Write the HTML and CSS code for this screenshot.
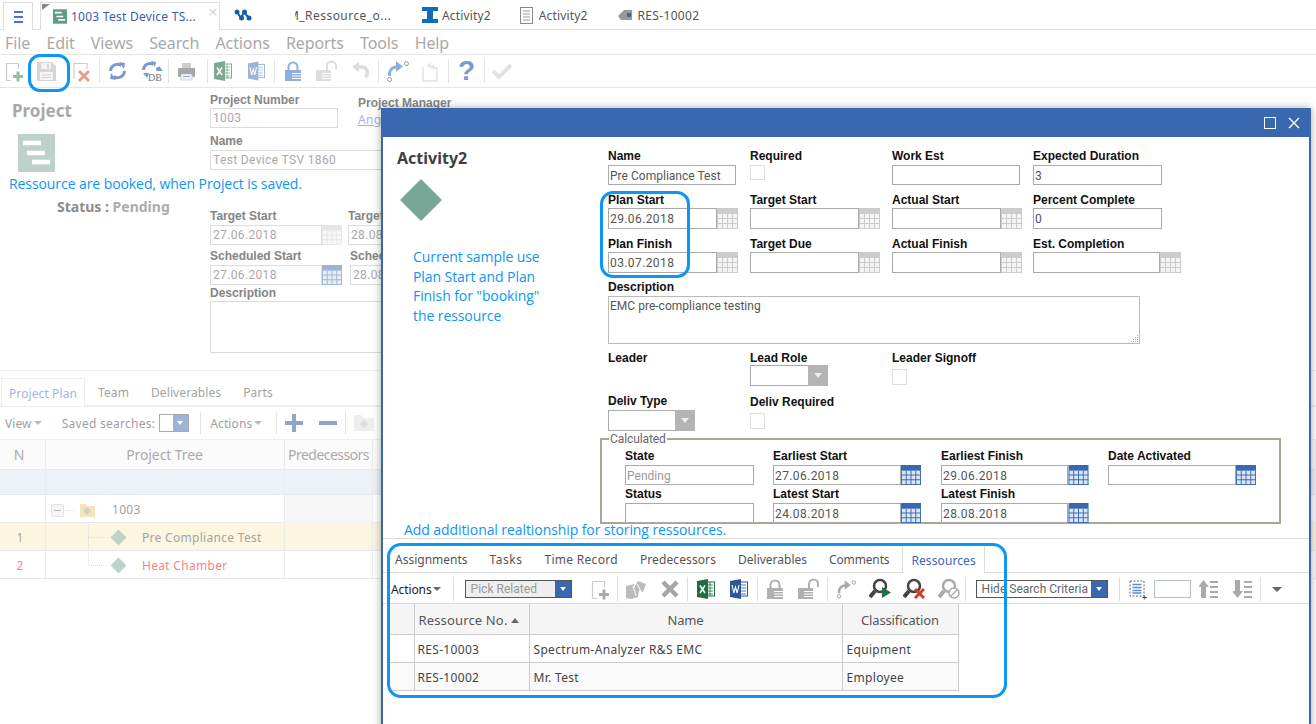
FILE: index.html
```html
<!DOCTYPE html>
<html lang="en">
<head>
<meta charset="utf-8">
<title>Activity2</title>
<link rel="stylesheet" href="styles.css">
</head>
<body>
<svg class="sprite" aria-hidden="true">
  <symbol id="i-new" viewBox="0 0 18 22"><path d="M13 3.5H1.5V20.5H6M13.5 3V9" fill="none" stroke="var(--b)" stroke-width="1.2"/><path d="M8 16.5h10M13 11.5v10" fill="none" stroke="var(--a)" stroke-width="3"/></symbol>
  <symbol id="i-save" viewBox="0 0 20 22"><path d="M1 2H16L20 6V21H1Z" fill="#d6d6d6"/><rect x="5" y="3" width="10" height="6" fill="#f2f2f2"/><rect x="11" y="4" width="2" height="4" fill="#d6d6d6"/><rect x="4" y="12" width="13" height="8" fill="#f4f4f4"/><path d="M6 15h9M6 17.500h9" stroke="#d6d6d6"/></symbol>
  <symbol id="i-del" viewBox="0 0 17 22"><path d="M1 19V3.500H14V9" fill="none" stroke="#ccc" stroke-width="1.200"/><path d="M6 11L16 21M16 11L6 21" stroke="#e89d88" stroke-width="3"/></symbol>
  <symbol id="i-refresh" viewBox="0 0 19 22"><path d="M2.500 11a7 7 0 0 1 11-5.500M16.500 11a7 7 0 0 1-11 5.500" fill="none" stroke="#7c9ac8" stroke-width="3"/><path d="M11 2l6 1-1 6zM8 20l-6-1 1-6z" fill="#7c9ac8"/></symbol>
  <symbol id="i-db" viewBox="0 0 21 22"><path d="M1.500 10a6.500 6.500 0 0 1 10-5.500M15 7.500a6 6 0 0 1 .5 2" fill="none" stroke="#7c9ac8" stroke-width="3"/><path d="M9 1l5 1-1 5zM17 6l4 5h-7zM1 13h6l-2 5z" fill="#7c9ac8"/><text x="6" y="21" font-family="Liberation Serif, serif" font-size="10" fill="#777">DB</text></symbol>
  <symbol id="i-print" viewBox="0 0 17 22"><rect x="4" y="3" width="9" height="6" fill="#ccc"/><rect x="0" y="8" width="17" height="9" rx="1" fill="#a6a6a6"/><rect x="3" y="14" width="11" height="6" fill="#f2f2f2" stroke="#bbb" stroke-width=".6"/><path d="M5 16.500h7" stroke="#8fb0dc"/></symbol>
  <symbol id="i-xl" viewBox="0 0 18 22"><rect x="9" y="4" width="8.500" height="14" fill="#fff" stroke="var(--a)"/><path d="M11 7h5M11 10h5M11 13h5M11 16h5M13 4v14" stroke="var(--a)" stroke-width=".8"/><path d="M0 3L11 1V21L0 19Z" fill="var(--a)"/><path d="M3 7.500L8 15M8 7.500L3 15" stroke="#fff" stroke-width="1.500"/></symbol>
  <symbol id="i-wd" viewBox="0 0 18 22"><rect x="9" y="4" width="8.500" height="14" fill="#fff" stroke="var(--a)"/><path d="M11 7h5M11 10h5M11 13h5M11 16h5" stroke="var(--a)" stroke-width=".8"/><path d="M0 3L11 1V21L0 19Z" fill="var(--a)"/><path d="M2 7L3.800 15L5.500 9L7.200 15L9 7" fill="none" stroke="#fff" stroke-width="1.100"/></symbol>
  <symbol id="i-lock" viewBox="0 0 16 22"><path d="M3.500 10V7a4.500 4.500 0 0 1 9 0V10" fill="none" stroke="var(--a)" stroke-width="2"/><rect x="0" y="10" width="16" height="11" fill="var(--a)"/><path d="M7 13.500h9M7 16h9M7 18.500h9" stroke="#fff" stroke-width="1"/></symbol>
  <symbol id="i-unlock" viewBox="0 0 22 22"><path d="M11 10V6a4.500 4.500 0 0 1 9 0V9" fill="none" stroke="var(--a)" stroke-width="2"/><rect x="0" y="10" width="15" height="11" fill="var(--a)"/><path d="M6 13.500h9M6 16h9M6 18.500h9" stroke="#fff" stroke-width="1"/></symbol>
  <symbol id="i-undo" viewBox="0 0 17 22"><path d="M6 7H10a5.500 5.500 0 0 1 3 10" fill="none" stroke="#ddd" stroke-width="3.500"/><path d="M0 7l7-5v10z" fill="#ddd"/></symbol>
  <symbol id="i-route" viewBox="0 0 23 22"><path d="M3.500 16V13a7 7 0 0 1 8-6" fill="none" stroke="var(--a)" stroke-width="3"/><path d="M10 1L17 6.500L10 12z" fill="var(--a)"/><circle cx="3.500" cy="19.500" r="2" fill="#fff" stroke="#999"/><circle cx="20.500" cy="3.500" r="2" fill="#fff" stroke="#999"/></symbol>
  <symbol id="i-doc" viewBox="0 0 16 22"><path d="M1 7V21H15V7" fill="none" stroke="#e4e4e4" stroke-width="1.500"/><path d="M4 6L9 2v3h3l3 4h-5" fill="#e8e8e8"/></symbol>
  <symbol id="i-check" viewBox="0 0 20 22"><path d="M1 11L7 17L19 5" fill="none" stroke="#e2e2e2" stroke-width="4"/></symbol>
  <symbol id="i-puzzle" viewBox="0 0 20 22"><path d="M0 8L8 6V10L12 3L20 6L17 14L13 12L12 19L5 21L0 20Z" fill="#bbb"/><path d="M7 8L10 18M11 6L15 13" stroke="#fff"/></symbol>
  <symbol id="i-x" viewBox="0 0 18 22"><path d="M2 4L16 18M16 4L2 18" stroke="#a6a6a6" stroke-width="4.500"/></symbol>
  <symbol id="i-go" viewBox="0 0 22 22"><circle cx="11" cy="8" r="6" fill="none" stroke="#444" stroke-width="2.500"/><path d="M6 13L1 19" stroke="#444" stroke-width="4"/><path d="M13 9L22 14.500L13 20z" fill="#1f7246"/></symbol>
  <symbol id="i-stop" viewBox="0 0 22 22"><circle cx="11" cy="8" r="6" fill="none" stroke="#444" stroke-width="2.500"/><path d="M6 13L1 19" stroke="#444" stroke-width="4"/><path d="M12 11L21 20M21 11L12 20" stroke="#c8402a" stroke-width="3"/></symbol>
  <symbol id="i-no" viewBox="0 0 22 22"><circle cx="11" cy="8" r="6" fill="none" stroke="#aaa" stroke-width="2.500"/><path d="M6 13L1 19" stroke="#aaa" stroke-width="4"/><circle cx="16" cy="15" r="5" fill="#fff" stroke="#aaa" stroke-width="1.500"/><path d="M12.500 18.500L19.500 11.500" stroke="#aaa" stroke-width="1.500"/></symbol>
  <symbol id="i-list" viewBox="0 0 18 22"><rect x="1" y="3" width="14" height="15" fill="none" stroke="#666" stroke-dasharray="2 1.500"/><path d="M3.500 6.500h9M3.500 9.500h9M3.500 12.500h9M3.500 15h9" stroke="#5b8bd0" stroke-width="1.500"/><path d="M13.500 19.500h4.500M15.800 17.500v4" stroke="#555"/></symbol>
  <symbol id="i-up" viewBox="0 0 19 22"><path d="M4.500 20V7" stroke="#aaa" stroke-width="5"/><path d="M-1 9L4.500 2L10 9z" fill="#aaa"/><path d="M11 4h8M11 9h8M11 14h8M11 19h8" stroke="#aaa" stroke-width="2"/></symbol>
  <symbol id="i-down" viewBox="0 0 19 22"><path d="M4.500 2V15" stroke="#aaa" stroke-width="5"/><path d="M-1 13L4.500 20L10 13z" fill="#aaa"/><path d="M11 4h8M11 9h8M11 14h8M11 19h8" stroke="#aaa" stroke-width="2"/></symbol>
  <symbol id="i-cal" viewBox="0 0 21 21"><rect x="0" y="6" width="21" height="15" fill="var(--b)"/><rect width="21" height="6" fill="var(--a)"/><path d="M.5 6v15M5.500 6v15M10.500 6v15M15.500 6v15M20.500 6v15M0 10.500h21M0 15.500h21M0 20.500h21" stroke="var(--a)" fill="none"/></symbol>
  <symbol id="i-proj" viewBox="0 0 37 38"><rect width="37" height="38" fill="var(--a)"/><path d="M5 9h18M9 19h18M14 28h18" stroke="#fff" stroke-width="4.500"/></symbol>
  <symbol id="i-dia" viewBox="0 0 40 40"><path d="M20 0L40 20L20 40L0 20Z" fill="var(--a)"/></symbol>
</svg>

<div class="page">
  <header class="tabbar">
    <button class="burger" type="button"><span></span><span></span><span></span></button>
    <div class="tab tab-active">
      <svg class="c-green" width="14" height="15"><use href="#i-proj"/></svg>
      <span class="tab-name">1003 Test Device TS...</span>
      <span class="tab-close">×</span>
    </div>
    <div class="tab tab-net">
      <svg width="18" height="12" viewBox="0 0 18 12"><path d="M3 3L7 9L10 3L15 9" fill="none" stroke="#0f62ad" stroke-width="2"/><circle cx="3" cy="3" r="2.500" fill="#0f62ad"/><circle cx="7.500" cy="9" r="2.500" fill="#0f62ad"/><circle cx="10.500" cy="3" r="2.500" fill="#0f62ad"/><circle cx="15" cy="9" r="2.500" fill="#0f62ad"/></svg>
    </div>
    <div class="tab tab-clip"><span class="clip-inner">M_Ressource_o...</span></div>
    <div class="tab tab-a">
      <svg width="16" height="16" viewBox="0 0 16 16"><path d="M0 0H16V4H11V12H16V16H0V12H5V4H0Z" fill="#0f6cc0"/></svg>
      <span>Activity2</span>
    </div>
    <div class="tab tab-b">
      <svg width="13" height="17" viewBox="0 0 13 17"><rect x=".5" y=".5" width="12" height="16" fill="#fff" stroke="#888"/><path d="M3 4h7M3 7h7M3 10h7M3 13h7" stroke="#999"/></svg>
      <span>Activity2</span>
    </div>
    <div class="tab tab-c">
      <svg width="14" height="12" viewBox="0 0 14 12"><path d="M0 7L6 1H14V11H6L3 11Z" fill="#999"/><rect x="9" y="4" width="4" height="4" fill="#2d6cb5"/></svg>
      <span>RES-10002</span>
    </div>
  </header>

  <nav class="menu">
    <span>File</span><span>Edit</span><span>Views</span><span>Search</span><span>Actions</span><span>Reports</span><span>Tools</span><span>Help</span>
  </nav>

  <div class="toolbar main-tools">
    <svg class="fade-new" width="18" height="22"><use href="#i-new"/></svg>
    <svg class="ml13" width="20" height="22"><use href="#i-save"/></svg>
    <svg class="ml17" width="17" height="22"><use href="#i-del"/></svg>
    <i class="sep ml9"></i>
    <svg class="ml8" width="19" height="22"><use href="#i-refresh"/></svg>
    <svg class="ml15" width="21" height="22"><use href="#i-db"/></svg>
    <i class="sep ml5"></i>
    <svg class="ml9" width="17" height="22"><use href="#i-print"/></svg>
    <i class="sep ml12"></i>
    <svg class="ml6 fade-xl" width="18" height="22"><use href="#i-xl"/></svg>
    <svg class="ml16 fade-wd" width="17" height="22"><use href="#i-wd"/></svg>
    <i class="sep ml9"></i>
    <svg class="ml10 fade-lock" width="16" height="22"><use href="#i-lock"/></svg>
    <svg class="ml15 fade-unlock" width="22" height="22"><use href="#i-unlock"/></svg>
    <svg class="ml14" width="17" height="22"><use href="#i-undo"/></svg>
    <i class="sep ml9"></i>
    <svg class="ml7 fade-lock" width="23" height="22"><use href="#i-route"/></svg>
    <svg class="ml13" width="16" height="22"><use href="#i-doc"/></svg>
    <i class="sep ml10"></i>
    <span class="help ml9">?</span>
    <i class="sep ml10"></i>
    <svg class="ml7" width="20" height="22"><use href="#i-check"/></svg>
  </div>

  <section class="project">
    <div class="proj-left">
      <h1>Project</h1>
      <svg class="proj-icon c-pale" width="37" height="38"><use href="#i-proj"/></svg>
      <p class="note note-saved">Ressource are booked, when Project is saved.</p>
      <p class="status"><b>Status :</b> <em>Pending</em></p>
    </div>
    <div class="proj-form">
      <div class="pf-row pf-r1">
        <div class="pf"><label>Project Number</label><div class="pin w128">1003</div></div>
        <div class="pf pf-mgr"><label>Project Manager</label><a class="plink">Angela</a></div>
      </div>
      <div class="pf pf-name"><label>Name</label><div class="pin w400">Test Device TSV 1860</div></div>
      <div class="pf-row pf-r3">
        <div class="pf pf-d"><label>Target Start</label><div class="dt"><div class="pin w112">27.06.2018</div><svg class="cal-faint" width="20" height="20"><use href="#i-cal"/></svg></div></div>
        <div class="pf"><label>Target Due</label><div class="pin w112">28.08.2018</div></div>
      </div>
      <div class="pf-row pf-r4">
        <div class="pf pf-d2"><label>Scheduled Start</label><div class="dt"><div class="pin w112">27.06.2018</div><svg class="cal-soft" width="20" height="20"><use href="#i-cal"/></svg></div></div>
        <div class="pf"><label>Scheduled End</label><div class="pin w112">28.08.2018</div></div>
      </div>
      <div class="pf pf-desc"><label>Description</label><div class="pin parea"></div></div>
    </div>
  </section>

  <section class="plan">
    <div class="plan-tabs">
      <span class="ptab ptab-on">Project Plan</span><span class="ptab">Team</span><span class="ptab">Deliverables</span><span class="ptab">Parts</span>
    </div>
    <div class="plan-tools">
      <span class="pt-text">View</span><i class="caret"></i>
      <span class="pt-saved">Saved searches:</span>
      <span class="mini-sel"><i></i></span>
      <i class="sep sep-p ml11"></i>
      <span class="pt-text ml9">Actions</span><i class="caret"></i>
      <i class="sep sep-p ml14"></i>
      <svg class="ml8" width="18" height="18" viewBox="0 0 18 18"><path d="M0 9h18M9 0v18" stroke="#8ea6cc" stroke-width="4"/></svg>
      <svg class="ml16" width="18" height="18" viewBox="0 0 18 18"><path d="M0 9h18" stroke="#8ea6cc" stroke-width="4"/></svg>
      <i class="sep sep-p ml8"></i>
      <svg class="ml8" width="20" height="16" viewBox="0 0 20 16"><path d="M0 0H7L9 3H20V16H0Z" fill="#eee"/><path d="M10 5L14 9L10 13L6 9Z" fill="#ddd"/></svg>
    </div>
    <div class="grid-row grid-head"><span>N</span><span>Project Tree</span><span>Predecessors</span><span></span></div>
    <div class="grid-row grid-filter"><span></span><span></span><span></span><span></span></div>
    <div class="grid-row grid-r">
      <span></span>
      <span class="tree">
        <svg class="tree-root" width="46" height="27" viewBox="0 0 46 27"><rect x="5.500" y="8.500" width="12" height="12" rx="1" fill="#f4f5f9" stroke="#dfe3ee"/><path d="M8 14.500h7" stroke="#bbb"/><path d="M19 14.500h10" stroke="#ddd" stroke-dasharray="1 1"/><path d="M34 8h5l2 2h8v11H34z" fill="#f6e3b8"/><path d="M41 11l4 4-4 4-4-4z" fill="#c2d6cd"/></svg>
        <b class="tree-t1">1003</b>
      </span>
      <span class="grey-cell"></span><span></span>
    </div>
    <div class="grid-row grid-r grid-sel">
      <span class="num">1</span>
      <span class="tree">
        <svg class="tree-leaf" width="82" height="27" viewBox="0 0 82 27"><path d="M.5 0V27M0 13.500h18" stroke="#ddd" stroke-dasharray="1 1"/><path d="M30.500 5.500L38.500 13.500L30.500 21.500L22.500 13.500Z" fill="#bdd3ca"/></svg>
        <b class="tree-t2">Pre Compliance Test</b>
      </span>
      <span></span><span></span>
    </div>
    <div class="grid-row grid-r grid-red">
      <span class="num">2</span>
      <span class="tree">
        <svg class="tree-leaf" width="82" height="27" viewBox="0 0 82 27"><path d="M.5 0V13.500H18" fill="none" stroke="#ddd" stroke-dasharray="1 1"/><path d="M30.500 5.500L38.500 13.500L30.500 21.500L22.500 13.500Z" fill="#bdd3ca"/></svg>
        <b class="tree-t2">Heat Chamber</b>
      </span>
      <span></span><span></span>
    </div>
  </section>

  <div class="dialog">
    <div class="dlg-title">
      <span class="dlg-max"></span>
      <svg width="12" height="12" viewBox="0 0 12 12"><path d="M1 1L11 11M11 1L1 11" stroke="#fff" stroke-width="1.400"/></svg>
    </div>
    <div class="dlg-main">
      <aside class="dlg-side">
        <h2>Activity2</h2>
        <svg class="dlg-dia c-teal" width="42" height="42"><use href="#i-dia"/></svg>
        <p class="note note-side">Current sample use<br>Plan Start and Plan<br>Finish for "booking"<br>the ressource</p>
      </aside>
      <div class="form">
        <div class="f"><label>Name</label><div class="in in-text w128">Pre Compliance Test</div></div>
        <div class="f"><label>Required</label><i class="chk"></i></div>
        <div class="f"><label>Work Est</label><div class="in w128"></div></div>
        <div class="f"><label>Expected Duration</label><div class="in w129 num-in">3</div></div>

        <div class="f"><label>Plan Start</label><div class="dt"><div class="in w109">29.06.2018</div><svg class="cal-grey" width="21" height="21"><use href="#i-cal"/></svg></div></div>
        <div class="f"><label>Target Start</label><div class="dt"><div class="in w109"></div><svg class="cal-grey" width="21" height="21"><use href="#i-cal"/></svg></div></div>
        <div class="f"><label>Actual Start</label><div class="dt"><div class="in w109"></div><svg class="cal-grey" width="21" height="21"><use href="#i-cal"/></svg></div></div>
        <div class="f"><label>Percent Complete</label><div class="in w129 num-in in-up">0</div></div>

        <div class="f"><label>Plan Finish</label><div class="dt"><div class="in w109">03.07.2018</div><svg class="cal-grey" width="21" height="21"><use href="#i-cal"/></svg></div></div>
        <div class="f"><label>Target Due</label><div class="dt"><div class="in w109"></div><svg class="cal-grey" width="21" height="21"><use href="#i-cal"/></svg></div></div>
        <div class="f"><label>Actual Finish</label><div class="dt"><div class="in w109"></div><svg class="cal-grey" width="21" height="21"><use href="#i-cal"/></svg></div></div>
        <div class="f"><label>Est. Completion</label><div class="dt"><div class="in w127"></div><svg class="cal-grey" width="21" height="21"><use href="#i-cal"/></svg></div></div>

        <div class="f f-desc"><label>Description</label><div class="in in-text area">EMC pre-compliance testing<svg class="grip" width="9" height="9" viewBox="0 0 9 9"><path d="M7 1h1v1H7zM5 3h1v1H5zM7 3h1v1H7zM3 5h1v1H3zM5 5h1v1H5zM7 5h1v1H7zM1 7h1v1H1zM3 7h1v1H3zM5 7h1v1H5zM7 7h1v1H7z" fill="#aaa"/></svg></div></div>

        <div class="f"><label>Leader</label></div>
        <div class="f"><label>Lead Role</label><div class="sel sel-up w78"><i></i></div></div>
        <div class="f f-span2"><label>Leader Signoff</label><i class="chk chk-lo"></i></div>

        <div class="f"><label>Deliv Type</label><div class="sel w87"><i></i></div></div>
        <div class="f f-span3 f-dr"><label>Deliv Required</label><i class="chk chk-lo"></i></div>

        <fieldset class="calc">
          <legend>Calculated</legend>
          <div class="c"><label>State</label><div class="in in-text w129 in-dim">Pending</div></div>
          <div class="c"><label>Earliest Start</label><div class="dt"><div class="in w128">27.06.2018</div><svg class="cal-blue" width="20" height="20"><use href="#i-cal"/></svg></div></div>
          <div class="c"><label>Earliest Finish</label><div class="dt"><div class="in w127">29.06.2018</div><svg class="cal-blue" width="21" height="20"><use href="#i-cal"/></svg></div></div>
          <div class="c"><label>Date Activated</label><div class="dt"><div class="in w128"></div><svg class="cal-blue" width="20" height="20"><use href="#i-cal"/></svg></div></div>
          <div class="c"><label>Status</label><div class="in w129"></div></div>
          <div class="c"><label>Latest Start</label><div class="dt"><div class="in w128">24.08.2018</div><svg class="cal-blue" width="20" height="20"><use href="#i-cal"/></svg></div></div>
          <div class="c"><label>Latest Finish</label><div class="dt"><div class="in w127">28.08.2018</div><svg class="cal-blue" width="21" height="20"><use href="#i-cal"/></svg></div></div>
        </fieldset>
      </div>
    </div>
    <p class="note note-add">Add additional realtionship for storing ressources.</p>
    <div class="rel-tabs">
      <span class="rtab">Assignments</span><span class="rtab">Tasks</span><span class="rtab">Time Record</span><span class="rtab">Predecessors</span><span class="rtab">Deliverables</span><span class="rtab">Comments</span><span class="rtab rtab-on">Ressources</span>
    </div>
    <div class="toolbar rel-tools">
      <span class="rt-actions">Actions</span><i class="caret caret-dark"></i>
      <i class="sep sep-r ml12"></i>
      <div class="combo combo-pick ml11"><span>Pick Related</span><i></i></div>
      <svg class="ml19 c-newg" width="18" height="22"><use href="#i-new"/></svg>
      <i class="sep sep-r ml8"></i>
      <svg class="ml8" width="20" height="22"><use href="#i-puzzle"/></svg>
      <svg class="ml15" width="18" height="22"><use href="#i-x"/></svg>
      <i class="sep sep-r ml8"></i>
      <svg class="ml9 c-xl" width="18" height="22"><use href="#i-xl"/></svg>
      <svg class="ml15 c-wd" width="18" height="22"><use href="#i-wd"/></svg>
      <i class="sep sep-r ml9"></i>
      <svg class="ml9 c-lock" width="16" height="22"><use href="#i-lock"/></svg>
      <svg class="ml15 c-lock" width="22" height="22"><use href="#i-unlock"/></svg>
      <i class="sep sep-r ml7"></i>
      <svg class="ml8 c-route" width="20" height="22"><use href="#i-route"/></svg>
      <svg class="ml13" width="22" height="22"><use href="#i-go"/></svg>
      <svg class="ml12" width="22" height="22"><use href="#i-stop"/></svg>
      <svg class="ml13" width="22" height="22"><use href="#i-no"/></svg>
      <i class="sep sep-r ml5"></i>
      <div class="combo combo-hide ml10"><span>Hide Search Criteria</span><i></i></div>
      <i class="sep sep-r ml11"></i>
      <svg class="ml9" width="18" height="22"><use href="#i-list"/></svg>
      <div class="page-in ml7"></div>
      <svg class="ml8" width="19" height="22"><use href="#i-up"/></svg>
      <svg class="ml15" width="19" height="22"><use href="#i-down"/></svg>
      <i class="sep sep-r ml8"></i>
      <i class="caret caret-more"></i>
    </div>
    <table class="res">
      <colgroup><col class="col0"><col class="col1"><col class="col2"><col class="col3"></colgroup>
      <thead><tr><th></th><th class="th-no">Ressource No. <i class="sort"></i></th><th>Name</th><th>Classification</th></tr></thead>
      <tbody>
        <tr><td></td><td>RES-10003</td><td>Spectrum-Analyzer R&amp;S EMC</td><td>Equipment</td></tr>
        <tr><td></td><td>RES-10002</td><td>Mr. Test</td><td>Employee</td></tr>
      </tbody>
    </table>
  </div>

  <div class="hl hl-save"></div>
  <div class="hl hl-plan"></div>
  <div class="hl hl-rel"></div>
</div>
</body>
</html>
```
FILE: styles.css
```css
* { box-sizing: border-box; }
html, body { margin: 0; padding: 0; }
body { font: 12px "Noto Sans", "Open Sans", sans-serif; color: #555; background: #fff; }
.sprite { position: absolute; width: 0; height: 0; overflow: hidden; }
.page { position: relative; width: 1316px; height: 724px; overflow: hidden; background: #fff; }
svg { display: block; flex: none; }
h1, h2, p { margin: 0; }
em { font-style: normal; }
i { display: block; font-style: normal; }

.ml5 { margin-left: 5px; } .ml6 { margin-left: 6px; } .ml7 { margin-left: 7px; } .ml8 { margin-left: 8px; }
.ml9 { margin-left: 9px; } .ml10 { margin-left: 10px; } .ml11 { margin-left: 11px; } .ml12 { margin-left: 12px; }
.ml13 { margin-left: 13px; } .ml14 { margin-left: 14px; } .ml15 { margin-left: 15px; } .ml16 { margin-left: 16px; }
.ml17 { margin-left: 17px; } .ml19 { margin-left: 19px; }

/* colour sets for sprite icons */
.c-green { --a: #5f9c84; } .c-pale { --a: #bdd3ca; } .c-teal { --a: #7aa898; }
.fade-new { --a: #8fc09f; --b: #ccc; } .c-newg { --a: #aaa; --b: #ccc; }
.fade-xl { --a: #7fa98e; } .fade-wd { --a: #9db3d8; } .c-xl { --a: #1d6f42; } .c-wd { --a: #2b5797; }
.fade-lock { --a: #8fb0dc; } .fade-unlock { --a: #ddd; } .c-lock { --a: #b0b0b0; } .c-route { --a: #aaa; }
.cal-faint { --a: #e6e6e6; --b: #f7f7f7; } .cal-grey { --a: #cccccc; --b: #f4f4f4; }
.cal-soft { --a: #9db3d8; --b: #e8eef8; } .cal-blue { --a: #3968b0; --b: #dbe6f5; }

/* top tabs */
.tabbar { display: flex; align-items: flex-start; height: 30px; border-bottom: 1px solid #ddd; padding-left: 3px; letter-spacing: .15px; color: #555; }
.burger { display: flex; flex-direction: column; justify-content: center; gap: 3px; width: 30px; height: 28px; margin-top: 2px; padding: 0 9px 0 10px; background: #fff; border: 1px solid #ddd; border-bottom: 0; }
.burger span { display: block; height: 2px; background: #4a76b8; width: 100%; }
.tab { display: flex; align-items: center; height: 30px; margin-top: 2px; }
.tab-active { position: relative; width: 180px; height: 28px; margin-left: 7px; padding-left: 12px; gap: 4px; background: #fff; border: 1px solid #ddd; border-bottom: 0; color: #3a5cab; letter-spacing: .25px; }
.tab-active::before { content: ""; position: absolute; left: 1px; top: 1px; border-style: solid; border-width: 6px 8px 0 0; border-color: #888 transparent transparent transparent; }
.tab-name { white-space: nowrap; }
.tab-close { position: absolute; right: 1px; top: 0; font-size: 17px; line-height: 18px; color: #cdd6ea; }
.tab-net { margin-left: 14px; height: 26px; width: 18px; }
.tab-clip { margin-left: 43px; width: 110px; height: 26px; overflow: hidden; letter-spacing: .45px; }
.clip-inner { display: block; margin-left: -7px; white-space: nowrap; }
.tab-a { margin-left: 17px; gap: 4px; height: 26px; }
.tab-b { margin-left: 29px; gap: 6px; height: 26px; }
.tab-c { margin-left: 31px; gap: 5px; height: 26px; letter-spacing: .35px; }

/* menu */
.menu { display: flex; gap: 16.2px; height: 25px; padding: 1px 0 0 5px; align-items: center; font-size: 16px; color: #a9a9a9; border-bottom: 1px solid #e6e6e6; }
.menu span { letter-spacing: -.1px; }

/* toolbars */
.toolbar { display: flex; align-items: center; }
.main-tools { height: 33px; border-bottom: 1px solid #e6e6e6; padding-left: 5px; }
.sep { flex: none; width: 1px; height: 24px; background: #e4e4e4; }
.help { font: bold 28px/30px "Liberation Sans", sans-serif; color: #7c9ac8; width: 16px; text-align: center; }

/* project header */
.project { display: flex; height: 283px; border-bottom: 1px solid #eee; overflow: hidden; }
.proj-left { width: 210px; flex: none; position: relative; }
.proj-left h1 { margin: 13px 0 0 12px; font: bold 17px/20px "Noto Sans", sans-serif; color: #a9a9a9; }
.proj-icon { margin: 13px 0 0 18px; }
.note { color: #0d96f2; font: 14px/20px "Open Sans", "Noto Sans", sans-serif; white-space: nowrap; letter-spacing: -.08px; }
.note-saved { margin: 2px 0 0 9px; }
.status { margin: 3px 0 0 57px; font: 14px/20px "Noto Sans", sans-serif; white-space: nowrap; }
.status b { color: #8c8c8c; }
.status em { color: #acacac; font-weight: bold; }
.proj-form { flex: none; width: 700px; padding-top: 5px; color: #999; }
.proj-form label { display: block; font: bold 12px/14px "Liberation Sans", sans-serif; color: #858585; white-space: nowrap; }
.pf-row { display: flex; }
.pf-r1 { height: 47px; }
.pf-mgr { margin: 3px 0 0 20px; }
.pf-name { height: 40px; margin-top: -6px; }
.pf-r3 { margin-top: 35px; height: 40px; }
.pf-r3 .pf-d { width: 138px; }
.pf-r4 { height: 37px; }
.pf-r4 .pf-d2 { width: 140px; }
.pf-r3 .pf label { margin-bottom: 2px; }
.pf-r4 .pf label { margin-bottom: 2px; }
.pf-desc label { margin-bottom: 1px; }
.pin { height: 20px; padding-left: 2px; border: 1px solid #dcdcdc; font: 12px/18px Roboto, sans-serif; letter-spacing: .35px; color: #a9a9a9; white-space: nowrap; background: #fff; }
.w128 { width: 128px; } .w400 { width: 400px; } .w112 { width: 112px; }
.pf-r1 label { margin-bottom: 1px; }
.pf-name label { margin-bottom: 2px; }
.parea { width: 400px; height: 52px; }
.plink { color: #a4b5dc; font-size: 12px; text-decoration: underline; letter-spacing: .3px; }

.dt { display: flex; }

/* project plan grid */
.plan-tabs { display: flex; height: 36px; padding: 7px 0 0 1px; border-bottom: 2px solid #eee; }
.ptab { height: 27px; padding: 0 8px; line-height: 29px; color: #a3a3a3; font-size: 12px; letter-spacing: .1px; margin-right: 6px; }
.ptab-on { color: #a4b5dc; border: 1px solid #eee; border-bottom: 0; background: #fff; height: 28px; padding: 0 7px; margin-right: 5px; }
.plan-tools { display: flex; align-items: center; height: 33px; padding-left: 5px; border-bottom: 1px solid #eee; }
.pt-text { color: #a0a0a0; letter-spacing: .1px; }
.caret { flex: none; width: 0; height: 0; margin-left: 2px; border-style: solid; border-width: 4px 4px 0 4px; border-color: #bbb transparent transparent transparent; }
.pt-saved { margin-left: 20px; color: #a0a0a0; letter-spacing: .27px; }
.mini-sel { display: flex; justify-content: flex-end; margin-left: 4px; width: 30px; height: 18px; border: 1px solid #aaa; }
.mini-sel i { width: 15px; background: #9db3d8; position: relative; }
.mini-sel i::after { content: ""; position: absolute; left: 4px; top: 6px; border-style: solid; border-width: 4px 3px 0 3px; border-color: #fff transparent transparent transparent; }
.sep-p { height: 22px; }

.grid-row { display: grid; grid-template-columns: 46px 239px 88px 1fr; border-bottom: 1px solid #e8e8e8; }
.grid-row > span { border-right: 1px solid #ececec; }
.grid-head { height: 30px; background: #fbfbfb; font-size: 14px; line-height: 29px; text-align: center; color: #aaa; }
.grid-head > span { white-space: nowrap; overflow: hidden; }
.grid-head > span:nth-child(1) { padding-right: 7px; }
.grid-head > span:nth-child(2) { padding-right: 1px; letter-spacing: -.1px; }
.grid-head > span:nth-child(3) { letter-spacing: -.55px; }
.grid-filter { height: 25px; background: #edf1f8; }
.grid-r { height: 28px; line-height: 29px; color: #a3a3a3; letter-spacing: .3px; }
.grid-sel { background: #fcf6e0; }
.grid-red { color: #ff7f85; }
.num { text-align: center; padding-right: 5px; }
.tree { display: flex; align-items: center; }
.tree b { font-weight: normal; }
.tree-root { overflow: visible; }
.tree-t1 { margin-left: 20px; }
.tree-leaf { margin-left: 42px; }
.tree-t2 { margin-left: -28px; }
.grey-cell { background: #f6f6f6; }

/* dialog */
.dialog { position: absolute; left: 381px; top: 108px; width: 930px; height: 640px; background: #fff; border: solid #3968b0; border-width: 0 2px; box-shadow: 0 0 8px rgba(0,0,0,.35); }
.dlg-title { display: flex; align-items: center; justify-content: flex-end; gap: 12px; height: 29px; padding-right: 9px; background: #3968b0; }
.dlg-max { width: 12px; height: 12px; border: 1.5px solid #fff; }
.dlg-main { display: flex; height: 385px; }
.dlg-side { width: 225px; flex: none; }
.dlg-side h2 { margin: 11px 0 0 14px; font: bold 16px/20px "Noto Sans", sans-serif; color: #404040; }
.dlg-dia { margin: 11px 0 0 17px; }
.note-side { margin: 26px 0 0 30px; line-height: 19.700px; }
.form { display: grid; grid-template-columns: 142px 142px 141px 1fr; grid-template-rows: 44px 44px 44px 70px 43px 38px; align-content: start; padding-top: 12px; flex: 1; }
.f label, .c label { display: block; font: bold 12px/14px "Liberation Sans", sans-serif; color: #111; white-space: nowrap; margin-bottom: 2px; }
.in { height: 20px; padding: 1px 0 0 1px; border: 1px solid #aaa; background: #fff; font: 12px/18px Roboto, sans-serif; letter-spacing: .4px; color: #555; white-space: nowrap; overflow: hidden; }
.in-text { letter-spacing: .02px; }
.dt .in { height: 21px; }
.c .in { height: 20px; }
.f .dt, .in-up { margin-top: -1px; }
.in-up { height: 21px; }
.w109 { width: 109px; } .w127 { width: 127px; } .w129 { width: 129px; }
.w78 { width: 78px; } .w87 { width: 87px; }
.num-in { color: #5b4a8a; }
.in-dim { color: #999; }
.chk { display: block; width: 15px; height: 15px; margin-top: 2px; border: 1px solid #ddd; }
.chk-lo { margin-top: 4px; height: 16px; }
.f-desc { grid-column: 1 / -1; margin-top: -1px; }
.area { position: relative; width: 532px; height: 48px; white-space: normal; border-color: #bbb; padding-top: 0; }
.grip { position: absolute; right: 0; bottom: 0; }
.f-span2 { grid-column: span 2; }
.f-span3 { grid-column: span 3; }
.f-dr { margin-top: 1px; }
.sel { display: flex; justify-content: flex-end; height: 21px; border: 1px solid #aaa; }
.sel-up { margin-top: -2px; }
.sel i { position: relative; width: 20px; margin: -1px -1px -1px 0; background: #b4b4b4; }
.sel i::after { content: ""; position: absolute; left: 6px; top: 8px; border-style: solid; border-width: 5px 4px 0 4px; border-color: #eee transparent transparent transparent; }
.calc { grid-column: 1 / -1; display: grid; grid-template-columns: 148px 168px 167px 1fr; grid-template-rows: 38px 38px; width: 681px; height: 92px; margin: 0 0 0 -8px; padding: 3px 0 0 23px; border: 2px solid #aaa695; min-inline-size: 0; }
.calc legend { margin-left: -16px; padding: 0 1px; font: 12px/14px Roboto, sans-serif; color: #666; letter-spacing: -.1px; }
.note-add { margin: 0; padding-left: 21px; height: 17px; line-height: 16px; border-bottom: 1px solid #ddd; }
.rel-tabs { display: flex; height: 34px; padding: 6px 0 0 4px; border-bottom: 1px solid #ddd; }
.rtab { height: 28px; padding: 0 8px; line-height: 30px; color: #555; letter-spacing: .1px; margin-right: 6px; }
.rtab:nth-child(1) { letter-spacing: 0; }
.rtab:nth-child(2) { letter-spacing: .5px; }
.rtab:nth-child(3) { letter-spacing: .3px; }
.rtab:nth-child(5) { letter-spacing: 0; }
.rtab:nth-child(6) { letter-spacing: -.15px; }
.rtab-on { margin: 0 0 0 -1px; background: #fff; color: #3a66b8; border: 1px solid #ddd; border-bottom: 0; line-height: 29px; }
.rel-tools { height: 31px; padding: 2px 0 0 8px; border-bottom: 1px solid #ddd; }
.rt-actions { color: #222; letter-spacing: -.1px; }
.caret-dark { border-top-color: #666; margin-left: 1px; }
.sep-r { height: 24px; background: #ddd; }
.combo { display: flex; align-items: center; justify-content: space-between; height: 18px; border: 1px solid #555; font: 12px Roboto, sans-serif; white-space: nowrap; letter-spacing: .02px; overflow: hidden; }
.combo span { padding-left: 5px; }
.combo i { position: relative; flex: none; align-self: stretch; width: 16px; background: #3968b0; }
.combo i::after { content: ""; position: absolute; left: 5px; top: 6px; border-style: solid; border-width: 4px 3px 0 3px; border-color: #fff transparent transparent transparent; }
.combo-pick { width: 107px; background: #eee; color: #999; }
.combo-hide { width: 132px; color: #666; }
.page-in { width: 37px; height: 18px; border: 1px solid #b5bfd0; }
.caret-more { margin-left: 11px; border-width: 5px 5px 0 5px; border-top-color: #666; }

.res { border-collapse: collapse; table-layout: fixed; width: 570px; margin-left: 5px; font-size: 12px; }
.col0 { width: 26px; } .col1 { width: 115px; } .col2 { width: 313px; } .col3 { width: 116px; }
.res th, .res td { border: 1px solid #ccc; padding: 2px 0 0 4px; white-space: nowrap; letter-spacing: .32px; color: #444; }
.res td:nth-child(2) { padding-left: 3px; }
.res th { height: 30px; padding: 3px 0 0; background: #f5f5f5; font: normal 13px "Noto Sans", sans-serif; text-align: center; border-top: 0; color: #555; letter-spacing: -.15px; }
.res th:first-child, .res td:first-child { border-left: 0; }
.res td { height: 28px; }
.res tbody tr:nth-child(2) td { background: #fafafa; }
.res .th-no { text-align: left; padding-left: 4px; letter-spacing: .15px; }
.sort { display: inline-block; vertical-align: 2px; border-style: solid; border-width: 0 4px 5px 4px; border-color: transparent transparent #666 transparent; }

/* hand-drawn highlight rings lying over the page */
.hl { position: absolute; border: 3px solid #0d96f2; pointer-events: none; }
.hl-save { left: 28px; top: 54px; width: 42px; height: 38px; border-radius: 12px; }
.hl-plan { left: 600px; top: 191px; width: 90px; height: 87px; border-radius: 13px; }
.hl-rel { left: 387px; top: 543px; width: 620px; height: 155px; border-radius: 14px; }
```
